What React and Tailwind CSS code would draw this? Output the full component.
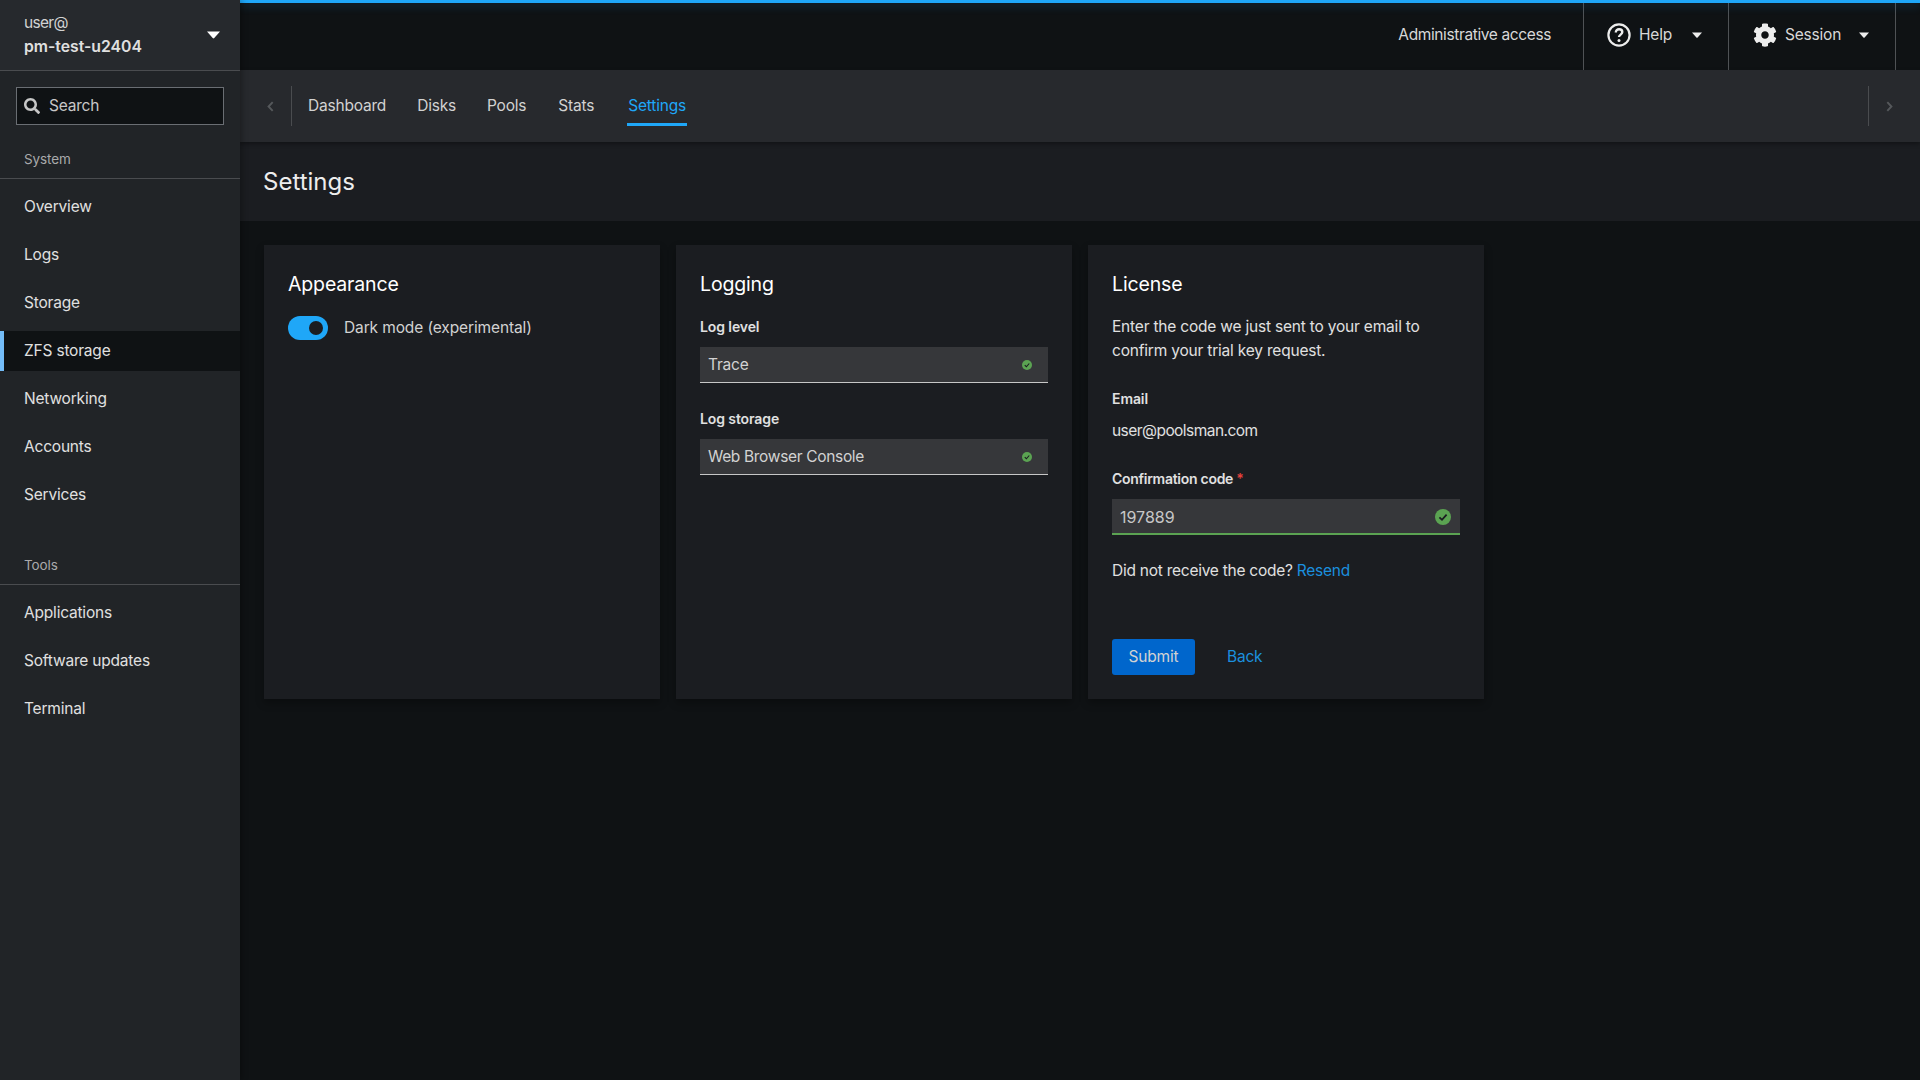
import React from "react";

const font = { fontFamily: "Inter, sans-serif" };

function Caret({ className = "" }) {
  return (
    <svg viewBox="0 0 10 6" className={className} fill="currentColor">
      <path d="M0 0.4 H10 L5.6 5.4 Q5 6 4.4 5.4 Z" />
    </svg>
  );
}

function Check({ className = "" }) {
  return (
    <svg viewBox="0 0 16 16" className={className}>
      <circle cx="8" cy="8" r="8" fill="#5ba352" />
      <path d="M4.4 8.3 L7 10.8 L11.6 5.6" fill="none" stroke="#1b1d21" strokeWidth="1.8" />
    </svg>
  );
}

const body = "text-[15.5px] tracking-[-0.2px]";

function NavGroup({ title, items, active }) {
  return (
    <div>
      <div className="h-[32px] pl-6 text-[13.5px] leading-[24px] tracking-[-0.1px] text-[#a9aaab] border-b border-[#4a4c4f]">{title}</div>
      <div className="pt-[8px] flex flex-col gap-[8px]">
        {items.map((i) => (
          <div
            key={i}
            className={
              i === active
                ? "h-[40px] flex items-center pl-5 text-[15.5px] tracking-[-0.2px] text-[#e0e0e0] bg-[#0f1214] border-l-4 border-[#73bcf7]"
                : "h-[40px] flex items-center pl-6 text-[15.5px] tracking-[-0.2px] text-[#e0e0e0]"
            }
          >
            {i}
          </div>
        ))}
      </div>
    </div>
  );
}

function Select({ value, spacing = "tracking-[-0.2px]" }) {
  return (
    <div className={"h-[36px] bg-[#36373a] border-b border-[#c7c7c7] flex items-center justify-between pl-2 pr-[16px] text-[15.5px] text-[#d2d2d2] " + spacing}>
      <span>{value}</span>
      <Check className="w-[10px] h-[10px]" />
    </div>
  );
}

function Card({ title, children }) {
  return (
    <section className="w-[396px] h-[454px] bg-[#1b1d21] p-6 shadow-[0_4px_8px_rgba(0,0,0,0.3)] flex flex-col">
      <h2 className="pt-[1px] text-[19.5px] leading-[28px] tracking-[-0.15px] text-white font-normal">{title}</h2>
      {children}
    </section>
  );
}

const label = "text-[14px] leading-[24px] tracking-[-0.1px] font-semibold text-[#e0e0e0]";

export default function App() {
  return (
    <div className="w-[1920px] h-[1080px] flex overflow-hidden bg-[#0f1214] text-[#e0e0e0]" style={font}>
      <aside className="w-[240px] shrink-0 bg-[#212427] flex flex-col shadow-[2px_0_6px_rgba(0,0,0,0.3)] z-10">
        <div className="h-[71px] shrink-0 bg-[#26292d] border-b border-[#4a4c4f] flex items-center justify-between pl-6 pr-[20px]">
          <div>
            <div className="text-[15.5px] tracking-[-0.7px] leading-[24px] text-[#d2d2d2]">user@</div>
            <div className="text-[15.75px] leading-[24px] font-semibold text-[#e0e0e0]">pm-test-u2404</div>
          </div>
          <Caret className="w-[13px] h-[8px] text-white" />
        </div>
        <div className="px-4 pt-4">
          <div className={"h-[38px] bg-[#0f1214] border border-[#6a6e73] flex items-center pl-[7px] gap-[9px] text-[#c7c7c7] " + body}>
            <svg viewBox="0 0 512 512" className="w-[16px] h-[16px]" fill="#c7c7c7">
              <path d="M505 442.700L405.300 343c-4.500-4.500-10.600-7-17-7H372c27.600-35.300 44-79.700 44-128C416 93.100 322.900 0 208 0S0 93.100 0 208s93.100 208 208 208c48.300 0 92.700-16.400 128-44v16.300c0 6.400 2.500 12.500 7 17l99.700 99.700c9.400 9.400 24.600 9.400 33.900 0l28.300-28.300c9.400-9.400 9.400-24.600.1-34zM208 336c-70.700 0-128-57.200-128-128 0-70.700 57.200-128 128-128 70.700 0 128 57.200 128 128 0 70.700-57.200 128-128 128z" />
            </svg>
            Search
          </div>
        </div>
        <div className="mt-[22px]">
          <NavGroup title="System" items={["Overview", "Logs", "Storage", "ZFS storage", "Networking", "Accounts", "Services"]} active="ZFS storage" />
        </div>
        <div className="mt-[38px]">
          <NavGroup title="Tools" items={["Applications", "Software updates", "Terminal"]} />
        </div>
      </aside>

      <div className="flex-1 flex flex-col min-w-0">
        <header className={"h-[70px] shrink-0 bg-[#0f1214] relative flex justify-end pr-[24px] text-[#d8d8d8] " + body}>
          <div className="absolute top-0 left-0 right-0 h-[3px] bg-[#1fa7f8] shadow-[0_3px_8px_rgba(31,167,248,0.25)]" />
          <div className="flex items-center pr-[32px] tracking-[-0.38px]">Administrative access</div>
          <div className="w-[145px] border-l border-[#4f5255] flex items-center pl-[23px] gap-[8px]">
            <svg viewBox="0 0 24 24" className="w-[24px] h-[24px]" fill="none" stroke="#ededed" strokeWidth="2.2">
              <circle cx="12" cy="12" r="10.6" />
              <path d="M8.800 9.400c0-1.900 1.400-3.100 3.300-3.100s3.200 1.200 3.200 2.800c0 2.500-3.300 2.500-3.300 5" strokeWidth="2.400" />
              <circle cx="12" cy="17.600" r="1.500" fill="#ededed" stroke="none" />
            </svg>
            <span>Help</span>
            <Caret className="w-[10px] h-[6px] ml-[12px] text-[#ededed]" />
          </div>
          <div className="w-[168px] border-l border-r border-[#4f5255] flex items-center pl-[24px] gap-[8px]">
            <svg viewBox="0 0 512 512" className="w-[24px] h-[24px]" fill="#ededed">
              <path d="M487.400 315.700l-42.600-24.600c4.300-23.200 4.300-47 0-70.200l42.600-24.600c4.900-2.800 7.100-8.600 5.500-14-11.100-35.600-30-67.800-54.700-94.600-3.800-4.100-10-5.100-14.800-2.300L380.800 110c-17.900-15.400-38.500-27.300-60.800-35.100V25.800c0-5.600-3.900-10.500-9.400-11.700-36.700-8.200-74.300-7.800-109.200 0-5.500 1.200-9.400 6.100-9.400 11.700V75c-22.200 7.900-42.800 19.800-60.800 35.100L88.700 85.500c-4.900-2.800-11-1.900-14.800 2.300-24.700 26.700-43.600 58.900-54.700 94.600-1.700 5.400.6 11.200 5.500 14L67.300 221c-4.300 23.200-4.300 47 0 70.200l-42.600 24.600c-4.900 2.800-7.100 8.600-5.500 14 11.100 35.600 30 67.800 54.700 94.600 3.800 4.100 10 5.100 14.800 2.300l42.600-24.600c17.900 15.400 38.500 27.300 60.800 35.100v49.200c0 5.600 3.900 10.500 9.400 11.700 36.700 8.200 74.300 7.800 109.200 0 5.500-1.200 9.400-6.100 9.400-11.700v-49.200c22.200-7.900 42.800-19.800 60.800-35.100l42.600 24.600c4.900 2.800 11 1.900 14.800-2.300 24.700-26.700 43.600-58.900 54.700-94.600 1.500-5.500-.7-11.300-5.600-14.100zM256 336c-44.100 0-80-35.900-80-80s35.900-80 80-80 80 35.900 80 80-35.900 80-80 80z" />
            </svg>
            <span>Session</span>
            <Caret className="w-[10px] h-[6px] ml-[10px] text-[#ededed]" />
          </div>
        </header>

        <nav className="h-[72px] shrink-0 bg-[#27292d] flex items-center justify-between shadow-[0_2px_4px_rgba(0,0,0,0.35)] z-[1]">
          <div className="flex items-center h-[40px]">
            <div className="w-[52px] h-full border-r border-[#4a4c4f] flex items-center pl-[27px] text-[#55585b]">
              <svg viewBox="0 0 8 12" className="w-[7px] h-[11px]" fill="none" stroke="currentColor" strokeWidth="2.2"><path d="M6.500 1 L1.800 6 L6.500 11" /></svg>
            </div>
            <div className={"flex items-center gap-[31px] pl-[16px] pb-[1px] text-[#d2d2d2] " + body}>
              <span>Dashboard</span>
              <span>Disks</span>
              <span>Pools</span>
              <span className="ml-[1px]">Stats</span>
              <span className="text-[#1fa7f8] relative ml-[3px]">
                Settings
                <span className="absolute -left-[1px] -right-[1px] top-[29px] h-[3px] bg-[#1fa7f8]" />
              </span>
            </div>
          </div>
          <div className="w-[52px] h-[40px] border-l border-[#4a4c4f] flex items-center pl-[17px] text-[#55585b]">
            <svg viewBox="0 0 8 12" className="w-[7px] h-[11px]" fill="none" stroke="currentColor" strokeWidth="2.2"><path d="M1.500 1 L6.200 6 L1.500 11" /></svg>
          </div>
        </nav>

        <div className="h-[79px] shrink-0 bg-[#1b1d21] flex items-center pl-[23px]">
          <h1 className="text-[24px] font-normal text-[#ededed]">Settings</h1>
        </div>

        <main className="flex gap-4 p-6">
          <Card title="Appearance">
            <div className="mt-[18px] flex items-center gap-4">
              <div className="w-[40px] h-[24px] rounded-full bg-[#1fa7f8] flex items-center justify-end pr-[5px]">
                <div className="w-[14px] h-[14px] rounded-full bg-[#1b1d21]" />
              </div>
              <span className="text-[15.5px] tracking-[-0.12px] text-[#d2d2d2]">Dark mode (experimental)</span>
            </div>
          </Card>
          <Card title="Logging">
            <div className={"mt-[17px] " + label}>Log level</div>
            <div className="mt-[8px]"><Select value="Trace" /></div>
            <div className={"mt-[24px] " + label}>Log storage</div>
            <div className="mt-[8px]"><Select value="Web Browser Console" spacing="tracking-[-0.33px]" /></div>
          </Card>
          <Card title="License">
            <p className={"mt-[17px] leading-[24px] text-[#e0e0e0] " + body}>
              Enter the code we just sent to your email to confirm your trial key request.
            </p>
            <div className={"mt-[24px] " + label}>Email</div>
            <div className="mt-[8px] text-[15.5px] tracking-[-0.55px] leading-[24px] text-[#e0e0e0]">user@poolsman.com</div>
            <div className="mt-[24px] text-[14px] leading-[24px] tracking-[-0.28px] font-semibold text-[#e0e0e0]">
              Confirmation code <span className="text-[#e5413c]">*</span>
            </div>
            <div className="mt-[8px] h-[36px] bg-[#36373a] border-b-2 border-[#5ba352] flex items-center justify-between pl-2 pr-[9px] pt-[2px] text-[16px] text-[#c7c7c7]">
              <span>197889</span>
              <Check className="w-[16px] h-[16px]" />
            </div>
            <div className="mt-[24px] text-[15.5px] tracking-[-0.25px] leading-[24px] text-[#e0e0e0]">
              Did not receive the code? <span className="text-[#1b8fde]">Resend</span>
            </div>
            <div className="mt-auto flex items-center">
              <div className={"h-[36px] w-[83px] rounded-[3px] bg-[#0066cc] flex items-center justify-center text-[#d2d2d2] " + body}>Submit</div>
              <div className={"ml-[32px] text-[#1b8fde] " + body}>Back</div>
            </div>
          </Card>
        </main>
      </div>
    </div>
  );
}
